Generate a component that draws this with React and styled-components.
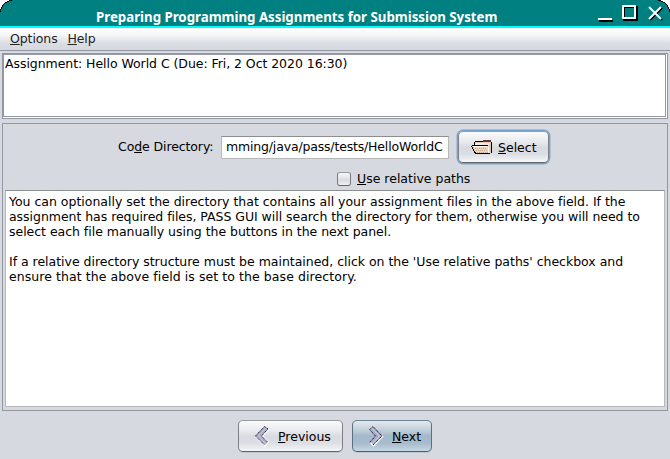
import React from "react";
import styled, { createGlobalStyle } from "styled-components";

const Global = createGlobalStyle`
  * { box-sizing: border-box; }
  body { margin: 0; background: #d6d9df; }
`;

const Window = styled.div`
  width: 670px;
  height: 459px;
  display: flex;
  flex-direction: column;
  overflow: hidden;
  background: #d6d9df;
  color: #000;
  font: 12.5px/15px "DejaVu Sans", sans-serif;
  white-space: pre;
`;

const TitleBar = styled.header`
  height: 28px;
  flex: none;
  display: flex;
  background: #fff;
  position: relative;
  background: #008080;
  border-bottom: 2px solid #00ffff;
  padding: 0 7px 0 96px;
`;

const Title = styled.h1`
  margin: 8px 0 0;
  flex: 1;
  color: #fff;
  font: bold 13.3px/18px "Noto Sans", sans-serif;
  letter-spacing: -0.02px;
`;

const Controls = styled.svg`
  width: 67px;
  height: 20px;
  margin-top: 4px;
  flex: none;
`;

const Corner = styled.svg`
  position: absolute;
  top: 0;
  width: 12px;
  height: 12px;
  ${(p) => (p.$right ? "right: 0; transform: scaleX(-1);" : "left: 0;")}
`;

const MenuBar = styled.nav`
  height: 23px;
  flex: none;
  display: flex;
  gap: 10px;
  padding: 3px 10px 0;
  color: #232323;
  background: linear-gradient(#fff, #f6f7f8 30%, #d9dce1 72%, #d6d9df);
  border-bottom: 1px solid #9297a1;
`;

const Mnemonic = styled.span`
  text-decoration: underline;
  text-decoration-thickness: 1px;
  text-underline-offset: 1px;
  text-decoration-skip-ink: none;
`;

const Label = styled.span`
  display: block;
  letter-spacing: ${(p) => p.$track || 0}px;
  margin-bottom: ${(p) => p.$lift || 0}px;
`;

const AssignmentList = styled.section`
  height: 66px;
  flex: none;
  margin: 2px 2px 4px;
  background: #fff;
  border: 1px solid #9297a1;
  border-right-width: 3px;
  border-bottom-width: 3px;
  border-right-style: double;
  border-bottom-style: double;
  box-shadow: inset 1px 1px #9297a1;
  padding: 2px 2px;
`;

const Panel = styled.main`
  height: 288px;
  flex: none;
  margin: 0 2px;
  padding: 0 2px 3px;
  border: 1px solid #9297a1;
  display: flex;
  flex-direction: column;
`;

const DirectoryRow = styled.div`
  display: flex;
  align-items: center;
  height: 46px;
  padding-left: 113px;
`;

const FieldLabel = styled.div`
  width: 103px;
  margin-bottom: 2px;
`;

const PathField = styled.div`
  width: 228px;
  height: 23px;
  margin-right: 9px;
  padding: 2px 4px;
  background: #fff;
  border: 1px solid #b7b8b9;
  border-top-color: #8d8e8f;
  overflow: hidden;
`;

const Button = styled.button`
  width: ${(p) => p.$width}px;
  height: 32px;
  padding: 0 0 0 ${(p) => p.$pad}px;
  display: flex;
  align-items: center;
  gap: ${(p) => p.$gap}px;
  font: inherit;
  color: #000;
  border: 1px solid;
  border-color: ${(p) => (p.$primary ? "#6f8292 #5c6f80 #4c5c6a" : "#999da2 #7c8085 #606469")};
  border-radius: 5px;
  background: ${(p) =>
    p.$primary
      ? "linear-gradient(#e3eaf0, #bccad6 35%, #a3b8ca 50%, #a7bccd 75%, #c6d8e6)"
      : "linear-gradient(#fbfbfc, #e6e8eb 35%, #d7dae0 52%, #dcdfe4 75%, #f5f7f9)"};
  box-shadow: ${(p) => (p.$focused ? "0 0 0 1.4px #73a4d1" : "0 1px #c3c7cd")};
`;

const OptionRow = styled.label`
  display: flex;
  align-items: center;
  height: 20px;
  padding: 0 0 2px 332px;
  gap: 6px;
`;

const Checkbox = styled.span`
  width: 14px;
  height: 14px;
  border: 1px solid;
  border-color: #94989e #777b81 #62666c;
  border-radius: 3px;
  background: linear-gradient(#f8f8f9, #d9dce1 60%, #eff0f2);
`;

const Instructions = styled.div`
  flex: 1;
  background: #fff;
  border: 1px solid #b7b8b9;
  border-top-color: #8d8e8f;
  padding: 3px 3px;
`;

const Footer = styled.footer`
  display: flex;
  justify-content: center;
  gap: 9px;
  padding-top: 9px;
`;

const Folder = () => (
  <svg width="21" height="16" viewBox="0 0 21 16" shapeRendering="crispEdges">
    <path d="M4 3h8l1-2h7v12l-2 2H6z" fill="#e6cdb6" />
    <path d="M4 2.5h8M3.500 3v3M20.500 3v11" stroke="#000" />
    <path d="M12 1h8v2h-8z" fill="#6b3434" />
    <path d="M4 4h14v3H4z" fill="#f4e9df" />
    <path d="M0 6h17l2 9H5z" fill="#ecd6c2" />
    <path d="M1 6.500h16" stroke="#000" />
    <path d="M2 7.500h14M17.500 8v6" stroke="#fff" />
    <path d="M.500 7l4 7.500H19" fill="none" stroke="#000" />
    <path d="M4 9h12M5 11h12M6 13h11" stroke="#c9a98d" strokeDasharray="1 1" />
  </svg>
);

const PreviousIcon = () => (
  <svg width="16" height="22" viewBox="0 0 16 22">
    <path d="M10.500 1.500l4 3-7 6.500 7 6.500-3.500 3L1.500 11z" fill="#a9a9c6" />
    <path d="M12 3l-7.500 8 7.500 8" fill="none" stroke="#cfcfe2" />
    <path d="M14.500 4.500l-6 6.500 6 6.500-3.500 3.500-9-9" fill="none" stroke="#fff" strokeWidth="1.300" />
    <path d="M14 4l-3.500-2.500-9 9.500 9 9M13.500 4.500L7.500 11l6 6" fill="none" stroke="#15152a" strokeDasharray="1.300 .7" />
  </svg>
);

const NextIcon = () => (
  <svg width="16" height="22" viewBox="0 0 16 22">
    <path d="M5 1.500l-3.500 3L7.500 11l-6 6.500 3.500 3 9.500-9.500z" fill="#a9a9c6" />
    <path d="M4 3.500l7.500 7.500L4 18.500" fill="none" stroke="#d3d3e6" />
    <path d="M15 11l-9.500 10-3-3" fill="none" stroke="#fff" strokeWidth="1.300" />
    <path d="M5 20l9-9-9-9.500-3.500 3L7.500 11l-6 6.500" fill="none" stroke="#15152a" strokeDasharray="1.300 .7" />
  </svg>
);

const CornerMask = ({ right }) => (
  <Corner $right={right} viewBox="0 0 12 12" shapeRendering="crispEdges">
    <path d="M0 0h12v1H9v1H7v1H5v1H4v1H3v2H2v2H1v3H0z" fill="#000" />
    <path d="M0 0h9v1H7v1H5v1H4v1H3v1H2v2H1v2H0z" fill="#fff" />
  </Corner>
);

const lines = [
  ["You can optionally set the directory that contains all your assignment files in the above field. If the", -0.012],
  ["assignment has required files, PASS GUI will search the directory for them, otherwise you will need to", -0.04],
  ["select each file manually using the buttons in the next panel.", -0.03],
  [" ", 0],
  ["If a relative directory structure must be maintained, click on the 'Use relative paths' checkbox and", -0.02],
  ["ensure that the above field is set to the base directory.", 0.075],
];

export default function App() {
  return (
    <Window>
      <Global />
      <TitleBar>
        <CornerMask />
        <CornerMask right />
        <Title>Preparing Programming Assignments for Submission System</Title>
        <Controls viewBox="0 0 67 20">
          <g stroke="#000" strokeWidth="2" fill="none">
            <path d="M3 17h14" />
            <path d="M28 3h13v13H28z" />
            <path d="M54 4l12 12M66 4L54 16" />
          </g>
          <g stroke="#fff" strokeWidth="2" fill="none">
            <path d="M2 15h14" />
            <path d="M27 2h12v12H27z" strokeLinejoin="round" />
            <path d="M53 3l12 12M65 3L53 15" />
          </g>
        </Controls>
      </TitleBar>
      <MenuBar>
        <Label $track={-0.1}><Mnemonic>O</Mnemonic>ptions</Label>
        <Label $track={-0.15}><Mnemonic>H</Mnemonic>elp</Label>
      </MenuBar>
      <AssignmentList>
        <Label $track={-0.055}>Assignment: Hello World C (Due: Fri, 2 Oct 2020 16:30)</Label>
      </AssignmentList>
      <Panel>
        <DirectoryRow>
          <FieldLabel><Label $track={-0.1}>Co<Mnemonic>d</Mnemonic>e Directory:</Label></FieldLabel>
          <PathField><Label $track={-0.17}>mming/java/pass/tests/HelloWorldC</Label></PathField>
          <Button $width={91} $pad={12} $gap={6} $focused><Folder /><Label><Mnemonic>S</Mnemonic>elect</Label></Button>
        </DirectoryRow>
        <OptionRow><Checkbox /><Label $lift={1}><Mnemonic>U</Mnemonic>se relative paths</Label></OptionRow>
        <Instructions>{lines.map(([text, track], i) => <Label key={i} $track={track}>{text}</Label>)}</Instructions>
      </Panel>
      <Footer>
        <Button $width={105} $pad={15} $gap={8}><PreviousIcon /><Label><Mnemonic>P</Mnemonic>revious</Label></Button>
        <Button $width={80} $pad={15} $gap={8} $primary><NextIcon /><Label><Mnemonic>N</Mnemonic>ext</Label></Button>
      </Footer>
    </Window>
  );
}
